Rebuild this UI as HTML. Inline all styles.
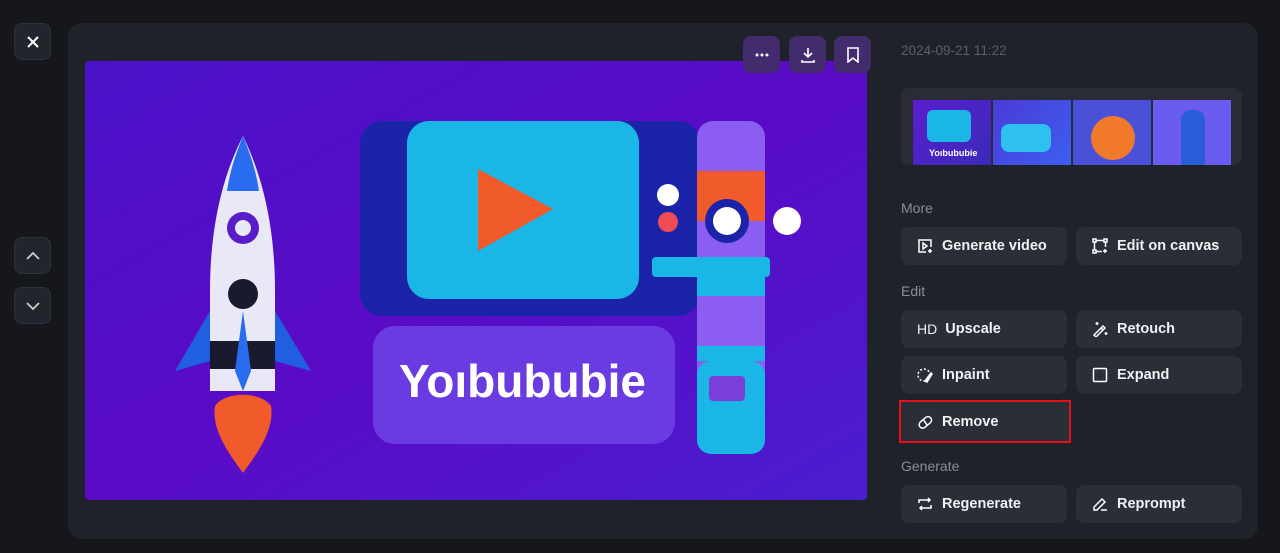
<!DOCTYPE html>
<html><head><style>
*{margin:0;padding:0;box-sizing:border-box}
body{width:1280px;height:553px;background:#15171c;font-family:"Liberation Sans",sans-serif;position:relative;overflow:hidden}
.abs{position:absolute}
.panel{left:68px;top:23px;width:1190px;height:516px;background:#1f2229;border-radius:14px}
.sq{background:#22252c;border:1px solid #2e323a;border-radius:8px;width:37px;height:37px;display:flex;align-items:center;justify-content:center}
.tb{width:37px;height:37px;border-radius:8px;background:#432c6e;display:flex;align-items:center;justify-content:center;top:36px}
.btn{position:absolute;width:166px;height:38px;background:#2a2e37;border-radius:8px;color:#f0f1f3;font-weight:bold;font-size:14.5px;display:flex;align-items:center;padding-left:16px}
.btn svg{margin-right:9px}
.lbl{position:absolute;left:901px;color:#8a8e96;font-size:14px}
</style></head><body>
<div class="abs panel"></div>
<div class="abs sq" style="left:14px;top:23px"><svg width="14" height="14" viewBox="0 0 14 14"><path d="M2 2L12 12M12 2L2 12" stroke="#fff" stroke-width="2"/></svg></div>
<div class="abs sq" style="left:14px;top:237px"><svg width="14" height="10" viewBox="0 0 14 10"><path d="M1 8L7 2L13 8" stroke="#ccc" stroke-width="1.8" fill="none"/></svg></div>
<div class="abs sq" style="left:14px;top:287px"><svg width="14" height="10" viewBox="0 0 14 10"><path d="M1 2L7 8L13 2" stroke="#ccc" stroke-width="1.8" fill="none"/></svg></div>

<svg class="abs" style="left:85px;top:61px" width="782" height="439" viewBox="0 0 782 439">
<defs><linearGradient id="bg" x1="0" y1="0" x2="1" y2="1"><stop offset="0" stop-color="#4a12c8"/><stop offset=".5" stop-color="#5a0bc6"/><stop offset="1" stop-color="#4a1dcf"/></linearGradient></defs>
<rect width="782" height="439" rx="4" fill="url(#bg)"/>
<rect x="275" y="60" width="340" height="195" rx="22" fill="#1b23a8"/>
<rect x="322" y="60" width="232" height="178" rx="22" fill="#1ab6e6"/>
<path d="M393 108L468 148L393 190Z" fill="#f15a2b"/>
<rect x="288" y="265" width="302" height="118" rx="22" fill="#6a3be0"/>
<text x="314" y="336" font-size="46" font-weight="bold" fill="#fff" font-family="Liberation Sans">Yoıbububie</text>
<rect x="612" y="60" width="68" height="333" rx="16" fill="#8b5df0"/>
<rect x="612" y="110" width="68" height="50" fill="#f15a2b"/>
<rect x="612" y="215" width="68" height="20" fill="#1ab6e6"/>
<rect x="612" y="285" width="68" height="15" fill="#1ab6e6"/>
<rect x="612" y="300" width="68" height="93" rx="14" fill="#1ab6e6"/>
<circle cx="642" cy="160" r="22" fill="#1b23a8"/><circle cx="642" cy="160" r="14" fill="#fff"/>
<circle cx="702" cy="160" r="14" fill="#fff"/>
<circle cx="583" cy="134" r="11" fill="#fff"/><circle cx="583" cy="161" r="10" fill="#f04a55"/>
<rect x="567" y="196" width="118" height="20" rx="4" fill="#1ab6e6"/>
<rect x="624" y="315" width="36" height="25" rx="4" fill="#7a3fd8"/>
<path d="M158 75C140 110 125 160 125 230L125 330L190 330L190 230C190 160 175 110 158 75Z" fill="#e8e8f7"/>
<path d="M158 75C150 95 145 110 142 130L174 130C171 110 166 95 158 75Z" fill="#2a6cf0"/>
<path d="M125 250L90 310L125 300ZM190 250L226 310L190 300Z" fill="#1f5fe0"/>
<circle cx="158" cy="167" r="16" fill="#5a1bc8"/><circle cx="158" cy="167" r="8" fill="#e8e8f7"/>
<circle cx="158" cy="233" r="15" fill="#1a1a2e"/>
<rect x="125" y="280" width="65" height="28" fill="#1a1a2e"/>
<path d="M158 250L150 310L158 330L166 310Z" fill="#2a6cf0"/>
<path d="M130 345C140 330 176 330 186 345C190 370 170 395 158 412C146 395 126 370 130 345Z" fill="#f15a2b"/>
</svg>

<div class="abs tb" style="left:743px"><svg width="14" height="4"><circle cx="2" cy="2" r="1.5" fill="#fff"/><circle cx="7" cy="2" r="1.5" fill="#fff"/><circle cx="12" cy="2" r="1.5" fill="#fff"/></svg></div>
<div class="abs tb" style="left:789px"><svg width="16" height="16" viewBox="0 0 16 16"><path d="M8 1V10M4 6L8 10L12 6M2 13V15H14V13" stroke="#fff" stroke-width="1.6" fill="none"/></svg></div>
<div class="abs tb" style="left:834px"><svg width="14" height="16" viewBox="0 0 14 16"><path d="M2 1H12V15L7 11L2 15Z" stroke="#fff" stroke-width="1.6" fill="none"/></svg></div>

<div class="abs" style="left:901px;top:43px;color:#5b5f67;font-size:13.5px">2024-09-21 11:22</div>
<div class="abs" style="left:901px;top:88px;width:341px;height:77px;background:#292c34;border-radius:8px;overflow:hidden">
<div class="abs" style="left:12px;top:12px;width:78px;height:65px;background:linear-gradient(135deg,#5b1dcf,#3a2bb8)"><div class="abs" style="left:14px;top:10px;width:44px;height:32px;background:#1ab6e6;border-radius:6px"></div><div class="abs" style="left:16px;top:48px;color:#fff;font-size:9px;font-weight:bold">Yoıbububie</div></div>
<div class="abs" style="left:92px;top:12px;width:78px;height:65px;background:linear-gradient(135deg,#4a3bd8,#3d5ff0)"><div class="abs" style="left:8px;top:24px;width:50px;height:28px;background:#2ec0ee;border-radius:8px"></div></div>
<div class="abs" style="left:172px;top:12px;width:78px;height:65px;background:#4a50d8"><div class="abs" style="left:18px;top:16px;width:44px;height:44px;border-radius:50%;background:#f07a2a"></div></div>
<div class="abs" style="left:252px;top:12px;width:78px;height:65px;background:#6a5cf0"><div class="abs" style="left:28px;top:10px;width:24px;height:55px;background:#2a5cd8;border-radius:10px 10px 2px 2px"></div></div>
</div>

<div class="lbl" style="top:200px">More</div>
<div class="btn" style="left:901px;top:227px"><svg width="16" height="16" viewBox="0 0 16 16" fill="none" stroke="#fff" stroke-width="1.5"><path d="M9 14H2V2H14V9"/><path d="M6 5L10 8L6 11Z"/><path d="M13 11V15M11 13H15"/></svg>Generate video</div>
<div class="btn" style="left:1076px;top:227px"><svg width="16" height="16" viewBox="0 0 16 16" fill="none" stroke="#fff" stroke-width="1.5"><rect x="1" y="1" width="3" height="3"/><rect x="12" y="1" width="3" height="3"/><rect x="1" y="12" width="3" height="3"/><path d="M4 2.5H12M2.5 4V12M4 13.5H10M13.5 4V9M13 11V15M11 13H15"/></svg>Edit on canvas</div>
<div class="lbl" style="top:283px">Edit</div>
<div class="btn" style="left:901px;top:310px"><span style="font-weight:normal;margin-right:8px;font-size:14px">HD</span>Upscale</div>
<div class="btn" style="left:1076px;top:310px"><svg width="16" height="16" viewBox="0 0 16 16" fill="none" stroke="#fff" stroke-width="1.5"><path d="M2 14L11 5L13 7L4 16ZM9 7L11 9"/><path d="M5 1V4M3.5 2.5H6.5M14 11V14M12.5 12.5H15.5"/></svg>Retouch</div>
<div class="btn" style="left:901px;top:356px"><svg width="16" height="16" viewBox="0 0 16 16" fill="none" stroke="#fff" stroke-width="1.5"><circle cx="7" cy="8" r="6" stroke-dasharray="2 2"/><path d="M8 14L14 6L15 7L10 15Z" fill="#fff"/></svg>Inpaint</div>
<div class="btn" style="left:1076px;top:356px"><svg width="16" height="16" viewBox="0 0 16 16" fill="none" stroke="#fff" stroke-width="1.5"><rect x="1.5" y="1.5" width="13" height="13" rx="1"/><path d="M5 5h.1M11 5h.1M5 11h.1M11 11h.1" stroke-width="1.8"/></svg>Expand</div>
<div class="btn" style="left:901px;top:402px;outline:2px solid #e5101a;outline-offset:0;border-radius:0;height:39px;width:168px"><svg width="16" height="16" viewBox="0 0 16 16" fill="none" stroke="#fff" stroke-width="1.5"><rect x="1" y="5" width="14" height="7" rx="3.5" transform="rotate(-40 8 8)"/><path d="M6 5L10 11"/></svg>Remove</div>
<div class="lbl" style="top:458px">Generate</div>
<div class="btn" style="left:901px;top:485px"><svg width="16" height="16" viewBox="0 0 16 16" fill="none" stroke="#fff" stroke-width="1.5"><path d="M2 7V4H13M11 2L13 4L11 6M14 9V12H3M5 10L3 12L5 14"/></svg>Regenerate</div>
<div class="btn" style="left:1076px;top:485px"><svg width="16" height="16" viewBox="0 0 16 16" fill="none" stroke="#fff" stroke-width="1.5"><path d="M2 14V11L10 3L13 6L5 14ZM9 14H15"/></svg>Reprompt</div>
</body></html>
